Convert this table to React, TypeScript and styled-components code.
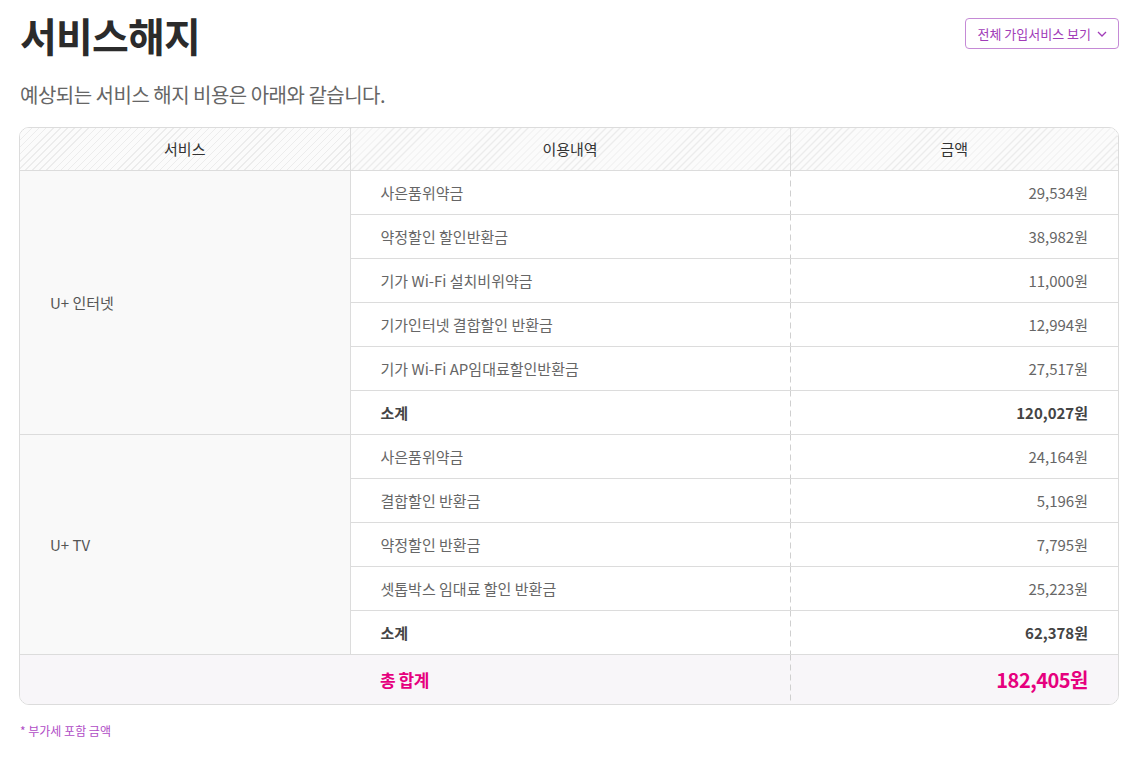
import React from "react";
import styled, { createGlobalStyle, css } from "styled-components";

const GlobalStyle = createGlobalStyle`
  html, body { margin: 0; padding: 0; background: #fff; }
  body {
    font-family: "Noto Sans CJK KR", "Noto Sans", sans-serif;
    color: #333;
  }
  * { box-sizing: border-box; }
`;

const dashedLeft = css`
  background-image: linear-gradient(to bottom, #cfcfcf 0, #cfcfcf 6px, transparent 6px, transparent 10px);
  background-size: 1px 10px;
  background-repeat: repeat-y;
  background-position: left top;
`;

const Page = styled.div`
  padding: 8px 20px 30px 19px;
`;

const HeaderRow = styled.div`
  display: flex;
  justify-content: space-between;
  align-items: flex-start;
`;

const Title = styled.h1`
  margin: 0;
  font-size: 40px;
  font-weight: 700;
  letter-spacing: -0.8px;
  line-height: 54px;
  color: #2b2b2b;
  padding-left: 1px;
`;

const AllButton = styled.button`
  margin-top: 10px;
  height: 31px;
  padding: 0 10px 0 12px;
  display: flex;
  align-items: center;
  gap: 5px;
  border: 1px solid #c58ad6;
  border-radius: 4px;
  background: #fff;
  color: #a13cb8;
  font-family: inherit;
  font-size: 13px;
  letter-spacing: 0;
  cursor: pointer;
`;

const Subtitle = styled.p`
  margin: 18px 0 0 1px;
  font-size: 20px;
  line-height: 30px;
  letter-spacing: -0.5px;
  color: #666;
  font-weight: 400;
`;

const TableBox = styled.div`
  margin-top: 17px;
  border: 1px solid #dcdcdc;
  border-radius: 10px;
  overflow: hidden;
`;

const Table = styled.table`
  width: 100%;
  border-collapse: collapse;
  table-layout: fixed;
  font-size: 15px;
  letter-spacing: 0;
`;

const Th = styled.th`
  height: 42px;
  font-weight: 400;
  color: #333;
  text-align: center;
  padding: 0;
  background-color: #fbfbfb;
  background-image: repeating-linear-gradient(
    -45deg,
    #fbfbfb 0px,
    #fbfbfb 4px,
    #ececec 4px,
    #ececec 5px
  );
  border-bottom: 1px solid #dcdcdc;
  & + & { border-left: 1px solid #dcdcdc; }
`;

const ServiceCell = styled.td`
  background: #f9f9f9;
  color: #555;
  padding: 0 0 0 30px;
  border-right: 1px solid #dcdcdc;
  border-bottom: 1px solid #dcdcdc;
  vertical-align: middle;
`;

const ItemCell = styled.td<{ $bold?: boolean }>`
  height: 44px;
  padding: 0 0 0 30px;
  color: ${(p) => (p.$bold ? "#444" : "#666")};
  font-weight: ${(p) => (p.$bold ? 700 : 400)};
  border-bottom: 1px solid #dcdcdc;
`;

const AmountCell = styled.td<{ $bold?: boolean }>`
  height: 44px;
  padding: 0 30px 0 0;
  text-align: right;
  color: ${(p) => (p.$bold ? "#444" : "#666")};
  font-weight: ${(p) => (p.$bold ? 700 : 400)};
  border-bottom: 1px solid #dcdcdc;
  ${dashedLeft}
`;

const TotalRow = styled.tr`
  background: #f8f6f9;
`;

const TotalLabel = styled.td`
  height: 50px;
  padding: 0 0 0 360px;
  color: #e6007e;
  font-weight: 700;
  font-size: 17px;
  letter-spacing: -0.5px;
`;

const TotalAmount = styled.td`
  padding: 0 30px 0 0;
  text-align: right;
  color: #e6007e;
  font-weight: 700;
  font-size: 20px;
  letter-spacing: -0.5px;
  ${dashedLeft}
`;

const Note = styled.p`
  margin: 17px 0 0 1px;
  font-size: 12px;
  color: #b04cc6;
  letter-spacing: 0;
`;

type Item = { name: string; amount: string };
type Group = { service: string; items: Item[]; subtotal: string };

const groups: Group[] = [
  {
    service: "U+ 인터넷",
    items: [
      { name: "사은품위약금", amount: "29,534원" },
      { name: "약정할인 할인반환금", amount: "38,982원" },
      { name: "기가 Wi-Fi 설치비위약금", amount: "11,000원" },
      { name: "기가인터넷 결합할인 반환금", amount: "12,994원" },
      { name: "기가 Wi-Fi AP임대료할인반환금", amount: "27,517원" },
    ],
    subtotal: "120,027원",
  },
  {
    service: "U+ TV",
    items: [
      { name: "사은품위약금", amount: "24,164원" },
      { name: "결합할인 반환금", amount: "5,196원" },
      { name: "약정할인 반환금", amount: "7,795원" },
      { name: "셋톱박스 임대료 할인 반환금", amount: "25,223원" },
    ],
    subtotal: "62,378원",
  },
];

const Chevron = () => (
  <svg width="12" height="12" viewBox="0 0 12 12" fill="none">
    <path d="M2 4l4 4 4-4" stroke="#a13cb8" strokeWidth="1.3" />
  </svg>
);

export default function App() {
  return (
    <>
      <GlobalStyle />
      <Page>
        <HeaderRow>
          <Title>서비스해지</Title>
          <AllButton>
            전체 가입서비스 보기 <Chevron />
          </AllButton>
        </HeaderRow>
        <Subtitle>예상되는 서비스 해지 비용은 아래와 같습니다.</Subtitle>
        <TableBox>
          <Table>
            <colgroup>
              <col style={{ width: 330 }} />
              <col style={{ width: 440 }} />
              <col />
            </colgroup>
            <thead>
              <tr>
                <Th>서비스</Th>
                <Th>이용내역</Th>
                <Th>금액</Th>
              </tr>
            </thead>
            <tbody>
              {groups.map((g) => (
                <React.Fragment key={g.service}>
                  {g.items.map((it, i) => (
                    <tr key={it.name}>
                      {i === 0 && (
                        <ServiceCell rowSpan={g.items.length + 1}>{g.service}</ServiceCell>
                      )}
                      <ItemCell>{it.name}</ItemCell>
                      <AmountCell>{it.amount}</AmountCell>
                    </tr>
                  ))}
                  <tr>
                    <ItemCell $bold>소계</ItemCell>
                    <AmountCell $bold>{g.subtotal}</AmountCell>
                  </tr>
                </React.Fragment>
              ))}
              <TotalRow>
                <TotalLabel colSpan={2}>총 합계</TotalLabel>
                <TotalAmount>182,405원</TotalAmount>
              </TotalRow>
            </tbody>
          </Table>
        </TableBox>
        <Note>* 부가세 포함 금액</Note>
      </Page>
    </>
  );
}
